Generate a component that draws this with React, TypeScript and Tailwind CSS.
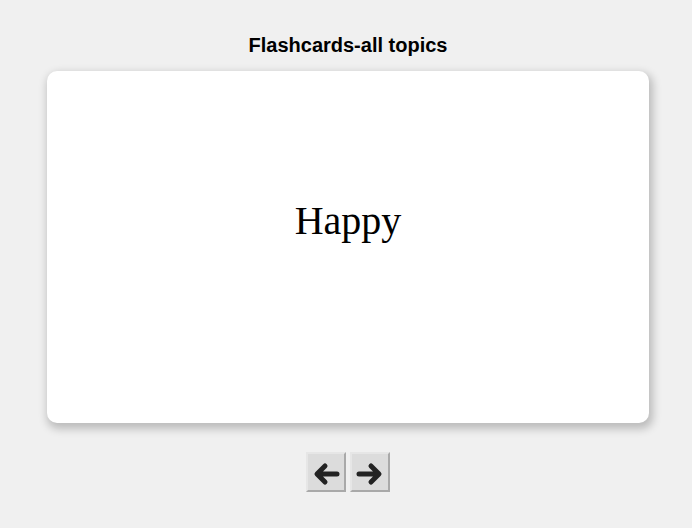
import React, { useState } from "react"

const words = ["Happy", "Sad", "Angry", "Tired"]

export default function App() {
  const [idx, setIdx] = useState(0)
  return (
    <div className="min-h-[528px] bg-[#f0f0f0] flex flex-col items-center pt-[33px] pl-[4px] font-['Liberation_Sans',Arial,sans-serif]">
      <h1 className="text-[20px] leading-[24px] font-bold text-black">Flashcards-all topics</h1>
      <div className="mt-[14px] w-[602px] h-[352px] bg-white rounded-[10px] shadow-[2px_4px_8px_2px_rgba(0,0,0,0.22)] flex items-center justify-center">
        <span className="text-[40px] font-['Liberation_Serif',serif] text-black leading-none -mt-[52px]">{words[idx]}</span>
      </div>
      <div className="mt-[29px] flex gap-[4px]">
        <ArrowButton dir="left" onClick={() => setIdx((idx + words.length - 1) % words.length)} />
        <ArrowButton dir="right" onClick={() => setIdx((idx + 1) % words.length)} />
      </div>
    </div>
  )
}

function ArrowButton({ dir, onClick }: { dir: "left" | "right"; onClick: () => void }) {
  return (
    <button
      onClick={onClick}
      className="w-[40px] h-[40px] bg-[#dcdcdc] border-2 border-t-[#e6e6e6] border-l-[#e6e6e6] border-r-[#a9a9a9] border-b-[#a9a9a9] flex items-center justify-center p-0"
    >
      <svg width="30" height="28" viewBox="0 0 30 28">
        {dir === "left" ? (
          <path d="M26 16H7M14 8L6 16L14 24" fill="none" stroke="#232323" strokeWidth="5" strokeLinecap="round" strokeLinejoin="round" />
        ) : (
          <path d="M4 16H23M16 8L24 16L16 24" fill="none" stroke="#232323" strokeWidth="5" strokeLinecap="round" strokeLinejoin="round" />
        )}
      </svg>
    </button>
  )
}
